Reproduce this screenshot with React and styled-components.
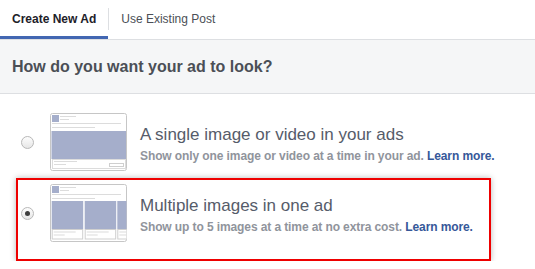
import styled, { createGlobalStyle } from "styled-components";

const GlobalStyle = createGlobalStyle`
  body {
    margin: 0;
    background: #fff;
    font-family: "Liberation Sans", Arial, sans-serif;
  }
`;

const Page = styled.div`
  width: 535px;
`;

const Tabs = styled.div`
  display: flex;
  align-items: stretch;
  height: 39px;
  border-bottom: 1px solid #dddfe2;
`;

const Tab = styled.div`
  display: flex;
  align-items: center;
  padding: 0 12px;
  font-size: 12px;
  font-weight: ${(p) => (p.$active ? "bold" : "normal")};
  color: ${(p) => (p.$active ? "#1d2129" : "#4b4f56")};
  box-shadow: ${(p) => (p.$active ? "inset 0 -3px 0 #4267b2" : "none")};
  padding-bottom: 2px;
`;

const Divider = styled.div`
  width: 1px;
  background: #dddfe2;
  margin: 8px 0 9px;
`;

const Header = styled.div`
  height: 53px;
  display: flex;
  align-items: center;
  padding: 0 12px;
  background: #f5f6f7;
  border-bottom: 1px solid #dddfe2;
`;

const Heading = styled.h2`
  margin: 0;
  font-size: 16px;
  font-weight: bold;
  color: #4b4f56;
`;

const List = styled.div`
  display: flex;
  flex-direction: column;
  padding: 13px 44px 0 16px;
`;

const Option = styled.div`
  display: flex;
  align-items: center;
  padding: 4px 0 ${(p) => (p.$selected ? "17px" : "5px")} 3px;
  border: 2px solid ${(p) => (p.$selected ? "#ee0000" : "transparent")};
  box-shadow: ${(p) => (p.$selected ? "0 0 6px rgba(0,0,0,0.28)" : "none")};
  background: #fff;
`;

const Radio = styled.span`
  width: 13px;
  height: 13px;
  box-sizing: border-box;
  border-radius: 50%;
  border: 1px solid #b8b8b8;
  background: linear-gradient(#fdfdfd, #e6e6e6);
  display: flex;
  align-items: center;
  justify-content: center;
  flex-shrink: 0;
  margin-right: 16px;

  &::after {
    content: "";
    display: ${(p) => (p.$checked ? "block" : "none")};
    width: 5px;
    height: 5px;
    border-radius: 50%;
    background: #3d3d3d;
  }
`;

const Thumb = styled.svg`
  flex-shrink: 0;
  display: block;
  margin-right: 13px;
`;

const Text = styled.div`
  display: flex;
  flex-direction: column;
  gap: 4px;
  padding-top: 4px;
  white-space: nowrap;
`;

const Title = styled.div`
  font-size: 17px;
  color: #565c6a;
`;

const Desc = styled.div`
  font-size: 12px;
  font-weight: bold;
  letter-spacing: -0.1px;
  color: #90949c;
`;

const LearnMore = styled.a`
  color: #365899;
  text-decoration: none;
`;

const IMG = "#a5aecb";
const LINE = "#dcdcdc";

const ThumbHeader = () => (
  <>
    <rect x="0.5" y="0.5" width="76" height="57" rx="2" fill="#fff" stroke="#c6c6c6" />
    <rect x="2" y="2" width="7" height="7" fill={IMG} />
    <rect x="10" y="3" width="16" height="1" fill={LINE} />
    <rect x="10" y="6" width="9" height="1" fill={LINE} />
    <rect x="2" y="10" width="69" height="1" fill={LINE} />
    <rect x="2" y="14" width="43" height="1" fill={LINE} />
  </>
);

const SingleThumb = () => (
  <Thumb width="77" height="58" viewBox="0 0 77 58">
    <ThumbHeader />
    <rect x="1.5" y="18" width="74.5" height="28" fill={IMG} />
    <rect x="2.5" y="46.5" width="73" height="9" fill="none" stroke={LINE} />
    <rect x="4" y="48" width="23" height="1" fill={LINE} />
    <rect x="4" y="51" width="12" height="1" fill={LINE} />
    <rect x="59.5" y="50.5" width="14" height="3" fill="none" stroke="#cfcfcf" />
  </Thumb>
);

const MultiThumb = () => (
  <Thumb width="77" height="58" viewBox="0 0 77 58">
    <defs>
      <clipPath id="mclip">
        <rect x="1" y="1" width="75.5" height="56" />
      </clipPath>
    </defs>
    <ThumbHeader />
    <g clipPath="url(#mclip)">
      {[1.7, 34.7, 67.3].map((x) => (
        <g key={x}>
          <rect x={x} y="17" width="31.5" height="28" fill={IMG} />
          <rect x={x + 0.5} y="45.5" width="30.5" height="9.5" fill="#fff" stroke="#cfcfcf" />
          <rect x={x + 2} y="47.5" width="22" height="1" fill={LINE} />
          <rect x={x + 2} y="50.5" width="11" height="1" fill={LINE} />
        </g>
      ))}
    </g>
  </Thumb>
);

const options = [
  {
    title: "A single image or video in your ads",
    desc: "Show only one image or video at a time in your ad.",
    thumb: <SingleThumb />,
  },
  {
    title: "Multiple images in one ad",
    desc: "Show up to 5 images at a time at no extra cost.",
    thumb: <MultiThumb />,
    selected: true,
  },
];

export default function App() {
  return (
    <Page>
      <GlobalStyle />
      <Tabs>
        <Tab $active>Create New Ad</Tab>
        <Divider />
        <Tab>Use Existing Post</Tab>
      </Tabs>
      <Header>
        <Heading>How do you want your ad to look?</Heading>
      </Header>
      <List>
        {options.map((o) => (
          <Option key={o.title} $selected={o.selected}>
            <Radio $checked={o.selected} />
            {o.thumb}
            <Text>
              <Title>{o.title}</Title>
              <Desc>
                {o.desc} <LearnMore href="#">Learn more.</LearnMore>
              </Desc>
            </Text>
          </Option>
        ))}
      </List>
    </Page>
  );
}
